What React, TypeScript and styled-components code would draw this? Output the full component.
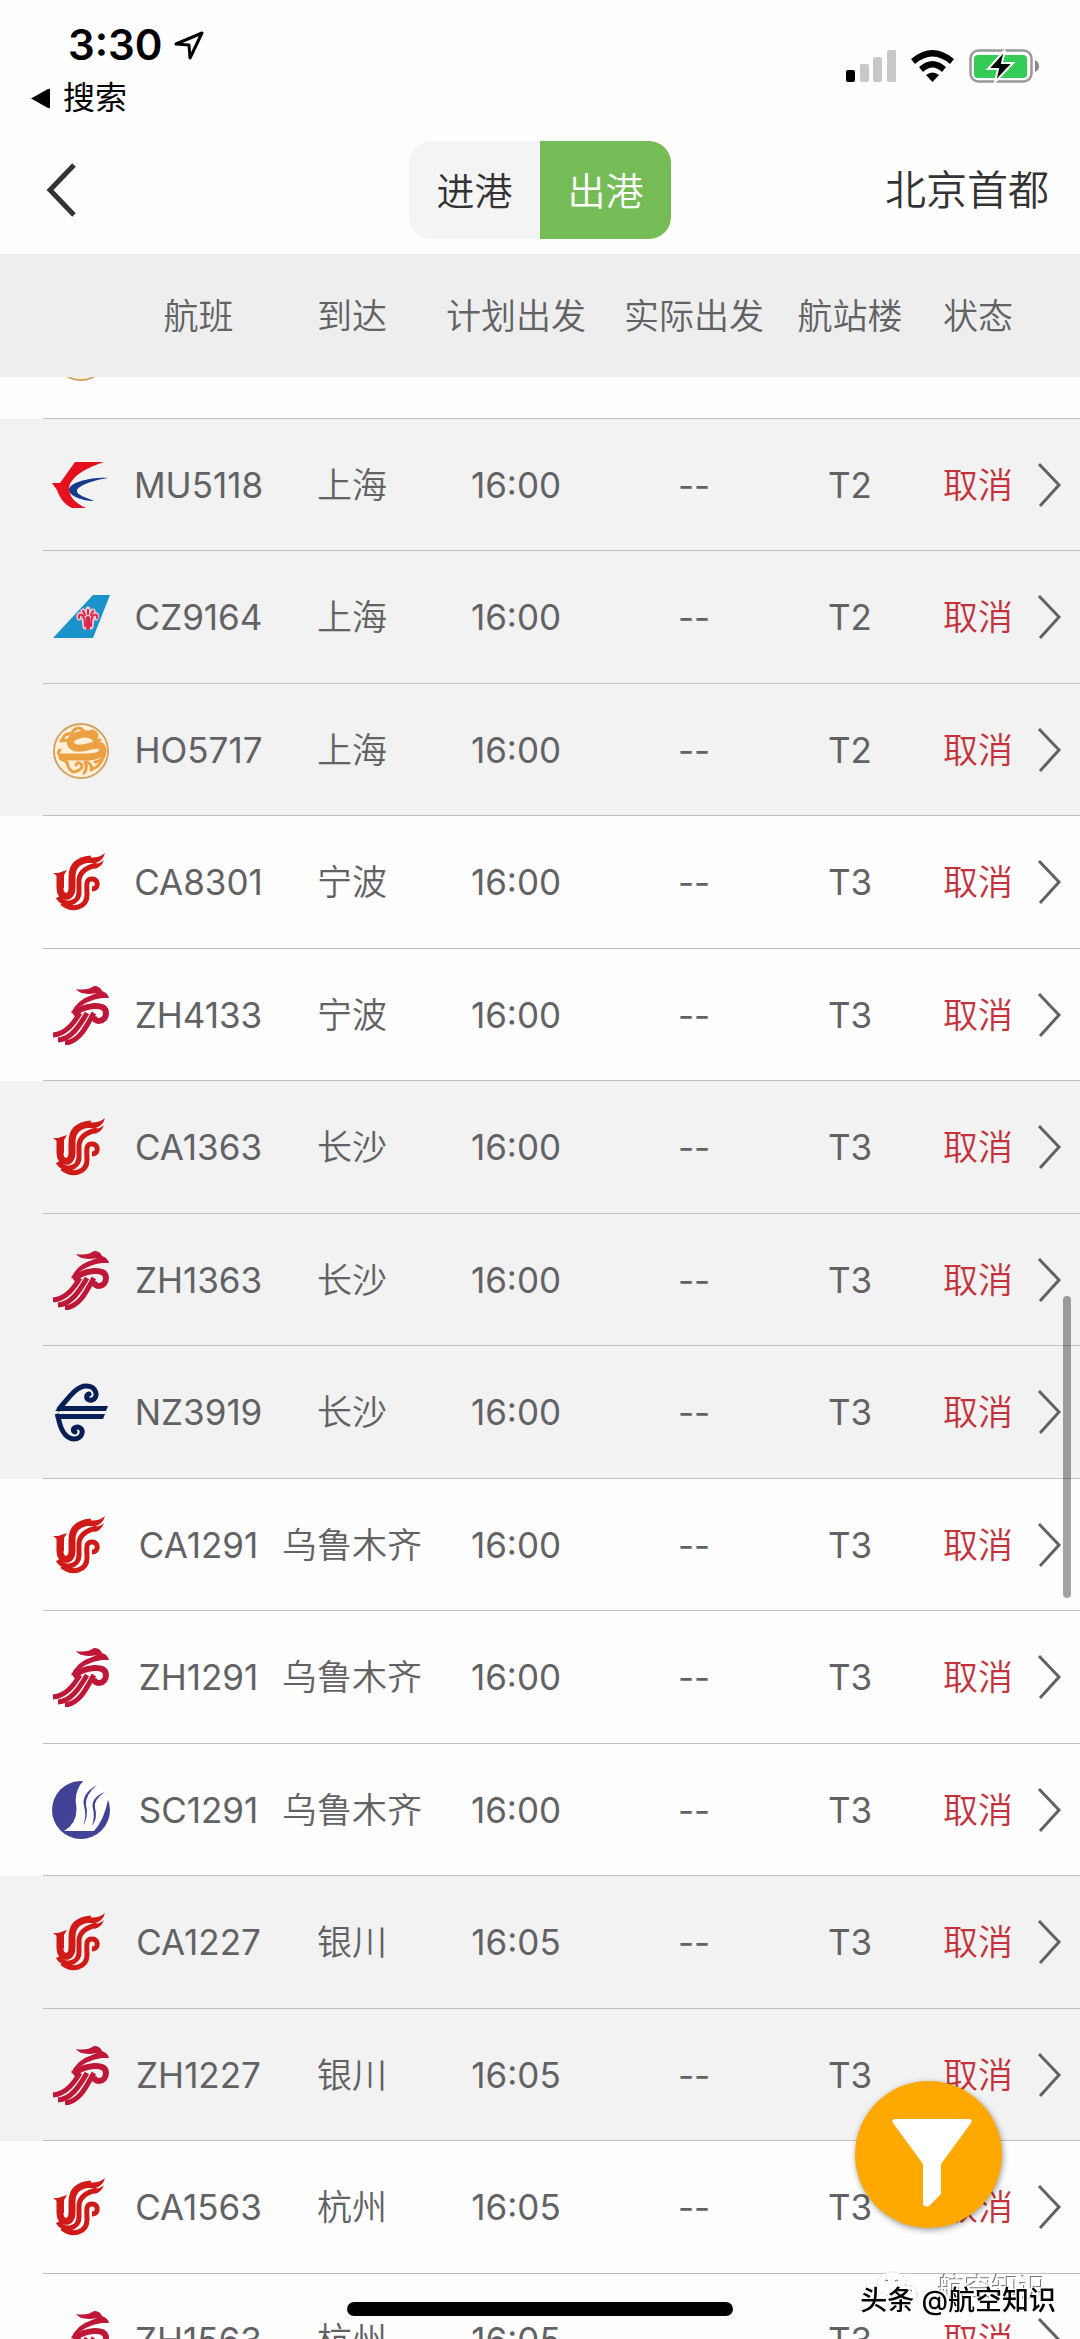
import React, { useLayoutEffect, useRef, useState } from "react";
import styled, { createGlobalStyle, css } from "styled-components";

const Global = createGlobalStyle`
  * { box-sizing: border-box; }
  body { margin: 0; background: #fefefe; }
  button, table { font: inherit; color: inherit; }
`;

const Screen = styled.div`
  position: relative;
  display: flex;
  flex-direction: column;
  height: 100vh;
  overflow: hidden;
  background: #fefefe;
  color: #626264;
  font-family: Inter, "Noto Sans CJK SC", sans-serif;
`;

const StatusBar = styled.div`
  display: flex;
  justify-content: space-between;
  flex: none;
  height: 126px;
  padding: 24px 41px 0 30px;
  color: #000;
`;

const Clock = styled.div`
  display: flex;
  align-items: center;
  gap: 11px;
  padding-left: 38px;
  font-size: 42px;
  line-height: 42px;
  font-weight: 600;
`;

const ReturnLink = styled.a`
  display: flex;
  align-items: center;
  gap: 12px;
  margin-top: 12px;
  color: #000;
  font-size: 32px;
  line-height: 40px;
  font-weight: 400;
  text-decoration: none;
`;

const Indicators = styled.div`
  display: flex;
  align-items: center;
  gap: 15px;
  height: 34px;
  margin-top: 25px;
`;

const NavBar = styled.header`
  display: grid;
  grid-template-columns: 1fr auto 1fr;
  align-items: center;
  flex: none;
  height: 128px;
  padding: 0 31px 0 45px;
  color: #333;
`;

const BackButton = styled.button`
  display: flex;
  justify-self: start;
  padding: 0;
  border: 0;
  background: none;
`;

const Segments = styled.div`
  display: flex;
  height: 98px;
  margin-right: 14px;
  border-radius: 22px;
  overflow: hidden;
`;

const Segment = styled.button<{ $active?: boolean }>`
  width: 131px;
  padding: 0 0 4px;
  border: 0;
  background: ${(p) => (p.$active ? "#75bc56" : "#f4f4f5")};
  color: ${(p) => (p.$active ? "#fff" : "#333")};
  font-size: 38px;
  font-weight: 350;
`;

const Airport = styled.div`
  justify-self: end;
  font-size: 41px;
  line-height: 60px;
  font-weight: 350;
`;

const ListArea = styled.main`
  position: relative;
  flex: 1;
  min-height: 0;
`;

const Scroller = styled.div`
  height: 100%;
  overflow-y: auto;
  scrollbar-width: none;
`;

const Table = styled.table`
  display: block;
  font-size: 35px;
  line-height: 50px;
`;

const rowGrid = css`
  display: grid;
  grid-template-columns: 43px 75px 161fr 146fr 182fr 174fr 138fr 118fr 43px;
`;

const Head = styled.thead`
  display: block;
  position: sticky;
  top: 0;
  z-index: 1;
  background: #eee;
`;

const HeadRow = styled.tr`
  ${rowGrid}
  height: 123px;
  align-items: center;
`;

const HeadCell = styled.th`
  padding: 0;
  font-weight: 350;
  text-align: center;
  white-space: nowrap;
`;

const Body = styled.tbody`
  display: block;
`;

const Row = styled.tr<{ $shaded: boolean }>`
  ${rowGrid}
  height: 132px;
  background: ${(p) => (p.$shaded ? "#f2f2f2" : "#fefefe")};
  &:nth-child(odd) { height: 133px; }
`;

const Cell = styled.td<{ $tone?: "alert" }>`
  display: flex;
  align-items: center;
  justify-content: center;
  padding: 0;
  border-bottom: 1px solid #bfbfbf;
  color: ${(p) => (p.$tone === "alert" ? "#c4333b" : "inherit")};
  font-weight: 350;
  white-space: nowrap;
`;

const LatinCell = styled(Cell)`
  font-weight: 400;
`;

const Gutter = styled.td`
  padding: 0;
`;

const DetailCell = styled(Cell)`
  justify-content: flex-start;
`;

const DetailButton = styled.button`
  display: flex;
  padding: 0;
  border: 0;
  background: none;
`;

const ScrollThumb = styled.div`
  position: absolute;
  right: 9px;
  top: 1042px;
  z-index: 2;
  width: 8px;
  height: 302px;
  border-radius: 4px;
  background: rgba(0, 0, 0, 0.36);
`;

const FilterButton = styled.button`
  position: absolute;
  right: 78px;
  bottom: 111px;
  z-index: 3;
  display: flex;
  align-items: center;
  justify-content: center;
  width: 147px;
  height: 147px;
  padding: 16px 0 0 6px;
  border: 0;
  border-radius: 50%;
  background: #ffa900;
  box-shadow: 1px 2px 6px rgba(0, 0, 0, 0.4);
`;

const HomeIndicator = styled.div`
  position: absolute;
  left: 50%;
  bottom: 23px;
  z-index: 3;
  width: 386px;
  height: 14px;
  border-radius: 7px;
  background: #000;
  transform: translateX(-50%);
`;

const Watermark = styled.div`
  position: absolute;
  right: 24px;
  bottom: 18px;
  z-index: 4;
  color: #000;
  font-size: 27px;
  line-height: 40px;
  font-weight: 500;
  text-shadow: 2px -1px 0 #fff, -1px 1px 0 #fff;
`;

const GhostMark = styled.div`
  position: absolute;
  right: 34px;
  bottom: 30px;
  z-index: 3;
  display: flex;
  align-items: center;
  gap: 20px;
  color: #fff;
  font-size: 27px;
  line-height: 40px;
  text-shadow: -1px -1px 0 #777;
`;

type Carrier = "MU" | "CZ" | "HO" | "CA" | "ZH" | "NZ" | "SC";

const Logo = styled.svg`
  width: 60px;
  height: 60px;
`;

function CarrierLogo({ code }: { code: Carrier }) {
  switch (code) {
    case "MU":
      return (
        <Logo viewBox="0 0 60 60" aria-hidden="true">
          <path d="M24 7H53C38 12 20 20 18 33C18 43 26 49 35 53H21C13 50 8 41 6 35L1 28H9Z" fill="#e60f1c" />
          <path d="M57 23C42 22 18 27 18 35C18 41 32 46 43 46C34 42 26 40 26 36C26 31 42 25 57 23Z" fill="#173a8b" />
        </Logo>
      );
    case "CZ":
      return (
        <Logo viewBox="0 0 60 60" aria-hidden="true">
          <path d="M42 8H59L42 51H2Z" fill="#1a93cb" />
          <g fill="none" stroke="#f5c3d2" strokeLinecap="round" strokeLinejoin="round">
            <path d="M28 31Q27 27 31 27Q34 28 36 31Q40 27 44 27Q47 28 45 31M32 24L34 28M37 22V28M42 24L40 28" strokeWidth="5" />
            <path d="M33 32L34 40H40L41 32Z" strokeWidth="5" fill="#f5c3d2" />
          </g>
          <g fill="none" stroke="#d9264a" strokeLinecap="round">
            <path d="M28 31Q27 27 31 28Q34 29 34 39M46 31Q47 27 43 28Q40 29 40 39M32 24L34 28M37 23V27M42 24L40 28" strokeWidth="2" />
            <path d="M37 31V41" strokeWidth="4" />
          </g>
        </Logo>
      );
    case "HO":
      return (
        <Logo viewBox="0 0 60 60" aria-hidden="true">
          <circle cx="30" cy="31" r="27" fill="#fdf1dc" stroke="#d2a566" strokeWidth="2" />
          <g fill="none" stroke="#eda042" strokeLinecap="round" strokeLinejoin="round">
            <path d="M43 17Q36 12 28 15Q17 18 20 25Q25 31 40 26Q52 23 52 31Q50 36 38 37H11" strokeWidth="7" />
            <path d="M45 18Q48 14 42 11L35 13L29 8Q23 8 21 13L14 15L10 21L17 20L20 25M43 21L49 20M51 24Q55 29 53 36Q51 41 44 42" strokeWidth="3" />
            <path d="M11 37Q5 33 9 30M10 39Q17 41 17 46Q20 54 26 51Q33 48 30 44Q27 41 25 45M34 42Q37 48 33 53M36 42Q42 45 40 50L47 46L51 40" strokeWidth="3" />
          </g>
        </Logo>
      );
    case "CA":
      return (
        <Logo viewBox="0 0 60 60" aria-hidden="true">
          <g fill="none" stroke="#cf1a17">
            <path d="M9 21V36C9 47 21 47 21 36V25C21 13 28 8 40 7" strokeWidth="7" />
            <path d="M7 45C13 55 28 52 28 40V28C29 19 36 15 46 13" strokeWidth="5" />
            <path d="M11 51C22 60 36 55 36 43C36 34 34 27 41 27C48 27 48 37 41 37" strokeWidth="5" />
          </g>
          <path d="M2 21H7L16 18L13 23V36H6V24ZM36 5Q47 7 54 1Q52 9 44 11L36 11ZM42 12Q49 12 53 8Q50 16 43 17Z" fill="#cf1a17" />
        </Logo>
      );
    case "ZH":
      return (
        <Logo viewBox="0 0 60 60" aria-hidden="true">
          <path d="M25 4Q36 6 43 1Q49 1 51 6Q57 8 58 13H51Q34 15 20 29Q25 15 41 10L46 8Q30 11 25 4Z" fill="#be1738" />
          <g fill="none" stroke="#be1738">
            <path d="M22 29C34 20 55 17 55 28C55 38 42 38 43 31" strokeWidth="6" />
            <path d="M29 28C24 36 16 49 2 50" strokeWidth="5" />
            <path d="M36 28C31 36 22 54 7 55" strokeWidth="5" />
            <path d="M43 28C37 37 30 57 14 58" strokeWidth="5" />
          </g>
        </Logo>
      );
    case "NZ":
      return (
        <Logo viewBox="0 0 60 60" aria-hidden="true">
          <path d="M4 29L10 24H57L55 29ZM4 32H54L52 37H5Z" fill="#071f54" />
          <g fill="none" stroke="#071f54" strokeWidth="5" strokeLinecap="round">
            <path d="M8 27C19 14 26 4 35 4C46 4 48 16 41 18C35 19 34 13 38 12" />
            <path d="M7 34C9 46 14 57 23 57C32 57 34 46 27 45C22 45 21 49 24 50" />
          </g>
        </Logo>
      );
    case "SC":
      return (
        <Logo viewBox="0 0 60 60" aria-hidden="true">
          <circle cx="30" cy="30" r="29" fill="#414296" />
          <path d="M34 -1Q23 10 25 24Q28 42 13 51H43Q53 40 57 20H62V-1Z" fill="#fefefe" />
          <path
            d="M46 5Q30 14 33 26Q36 36 32 46Q38 36 35 25Q34 15 46 5ZM54 12Q39 18 42 29Q44 37 41 46Q47 38 44 28Q42 20 54 12Z"
            fill="#414296"
          />
        </Logo>
      );
  }
}

interface Flight {
  carrier: Carrier;
  number: string;
  city: string;
  time: string;
  terminal: string;
  shaded: boolean;
}

const flight = (number: string, city: string, time: string, terminal: string, shaded: boolean): Flight => ({
  carrier: number.slice(0, 2) as Carrier,
  number,
  city,
  time,
  terminal,
  shaded,
});

const flights: Flight[] = [
  flight("MU5118", "上海", "16:00", "T2", true),
  flight("CZ9164", "上海", "16:00", "T2", true),
  flight("HO5717", "上海", "16:00", "T2", true),
  flight("CA8301", "宁波", "16:00", "T3", false),
  flight("ZH4133", "宁波", "16:00", "T3", false),
  flight("CA1363", "长沙", "16:00", "T3", true),
  flight("ZH1363", "长沙", "16:00", "T3", true),
  flight("NZ3919", "长沙", "16:00", "T3", true),
  flight("CA1291", "乌鲁木齐", "16:00", "T3", false),
  flight("ZH1291", "乌鲁木齐", "16:00", "T3", false),
  flight("SC1291", "乌鲁木齐", "16:00", "T3", false),
  flight("CA1227", "银川", "16:05", "T3", true),
  flight("ZH1227", "银川", "16:05", "T3", true),
  flight("CA1563", "杭州", "16:05", "T3", false),
  flight("ZH1563", "杭州", "16:05", "T3", false),
];

const headings = ["航班", "到达", "计划出发", "实际出发", "航站楼", "状态"];

function StatusIcons() {
  return (
    <Indicators>
      <svg width="50" height="32" viewBox="0 0 50 32" aria-hidden="true">
        <rect x="0" y="20" width="9" height="12" rx="2" fill="#000" />
        <rect x="14" y="14" width="9" height="18" rx="2" fill="#c8c8c8" />
        <rect x="27" y="7" width="9" height="25" rx="2" fill="#c8c8c8" />
        <rect x="41" y="0" width="9" height="32" rx="2" fill="#c8c8c8" />
      </svg>
      <svg width="43" height="32" viewBox="0 0 43 32" aria-hidden="true">
        <path d="M0 9Q21.5 -9 43 9L39 14Q21.5 -1 4 14Z" />
        <path d="M8 17Q21.5 5 35 17L31 22Q21.5 13 12 22Z" />
        <path d="M15 25Q21.5 20 28 25L21.5 32Z" />
      </svg>
      <svg width="70" height="34" viewBox="0 0 70 34" aria-hidden="true">
        <rect x="1.5" y="1.5" width="61" height="31" rx="8" fill="#fff" stroke="#999" strokeWidth="2.5" />
        <rect x="5" y="6" width="53" height="23" rx="4" fill="#34cc57" />
        <path d="M66 11Q70 13 70 17Q70 21 66 23Z" fill="#888" />
        <path d="M36 1L19 20H29L26 33L44 14H33Z" fill="#000" stroke="#fff" strokeWidth="2" />
      </svg>
    </Indicators>
  );
}

export default function App() {
  const scroller = useRef<HTMLDivElement>(null);
  const [direction, setDirection] = useState<"in" | "out">("out");

  useLayoutEffect(() => {
    if (scroller.current) scroller.current.scrollTop = 91;
  }, []);

  return (
    <Screen>
      <Global />
      <StatusBar>
        <div>
          <Clock>
            3:30
            <svg width="30" height="29" viewBox="0 0 30 29" fill="none" stroke="#000" strokeWidth="3" strokeLinejoin="round" aria-hidden="true">
              <path d="M28 2L2 13L15 14L16 27Z" />
            </svg>
          </Clock>
          <ReturnLink href="#">
            <svg width="21" height="21" viewBox="0 0 21 21" aria-hidden="true">
              <path d="M1 10.5L18 1Q20 0 20 2V19Q20 21 18 20Z" />
            </svg>
            搜索
          </ReturnLink>
        </div>
        <StatusIcons />
      </StatusBar>
      <NavBar>
        <BackButton aria-label="返回">
          <svg width="32" height="54" viewBox="0 0 32 54" fill="none" stroke="#333" strokeWidth="5" aria-hidden="true">
            <path d="M29 2L5 27L29 52" />
          </svg>
        </BackButton>
        <Segments>
          <Segment $active={direction === "in"} onClick={() => setDirection("in")}>进港</Segment>
          <Segment $active={direction === "out"} onClick={() => setDirection("out")}>出港</Segment>
        </Segments>
        <Airport>北京首都</Airport>
      </NavBar>
      <ListArea>
        <Scroller ref={scroller}>
          <Table>
            <Head>
              <HeadRow>
                <Gutter />
                <Gutter />
                {headings.map((h) => (
                  <HeadCell key={h} scope="col">{h}</HeadCell>
                ))}
              </HeadRow>
            </Head>
            <Body>
              <Row $shaded={false}>
                <Gutter />
                <Cell><CarrierLogo code="HO" /></Cell>
                <Cell /><Cell /><Cell /><Cell /><Cell /><Cell /><Cell />
              </Row>
              {flights.map((f) => (
                <Row key={f.number} $shaded={f.shaded}>
                  <Gutter />
                  <Cell><CarrierLogo code={f.carrier} /></Cell>
                  <LatinCell>{f.number}</LatinCell>
                  <Cell>{f.city}</Cell>
                  <LatinCell>{f.time}</LatinCell>
                  <LatinCell>--</LatinCell>
                  <LatinCell>{f.terminal}</LatinCell>
                  <Cell $tone="alert">取消</Cell>
                  <DetailCell>
                    <DetailButton aria-label="详情">
                      <svg width="25" height="46" viewBox="0 0 25 46" fill="none" stroke="#626264" strokeWidth="3" aria-hidden="true">
                        <path d="M2 2L22 23L3 44" />
                      </svg>
                    </DetailButton>
                  </DetailCell>
                </Row>
              ))}
            </Body>
          </Table>
        </Scroller>
        <ScrollThumb />
      </ListArea>
      <FilterButton aria-label="筛选">
        <svg width="80" height="88" viewBox="0 0 80 88" aria-hidden="true">
          <path d="M3 0H77Q81 0 79 4L49 45V75L37 87Q31 89 31 84V45L1 4Q-1 0 3 0Z" fill="#fff" />
        </svg>
      </FilterButton>
      <HomeIndicator />
      <GhostMark aria-hidden="true">
        <svg width="42" height="36" viewBox="0 0 42 36" aria-hidden="true">
          <ellipse cx="16" cy="13" rx="15" ry="12" fill="#fff" stroke="#ddd" strokeDasharray="3 2" />
          <ellipse cx="30" cy="23" rx="11" ry="9" fill="#fff" stroke="#ccc" strokeDasharray="3 2" />
          <path d="M9 10Q11 8 12 10M19 10Q21 8 22 10M25 20Q26 18 28 20M33 20Q34 18 36 20" fill="none" stroke="#555" />
        </svg>
        航空知识
      </GhostMark>
      <Watermark>头条 @航空知识</Watermark>
    </Screen>
  );
}
